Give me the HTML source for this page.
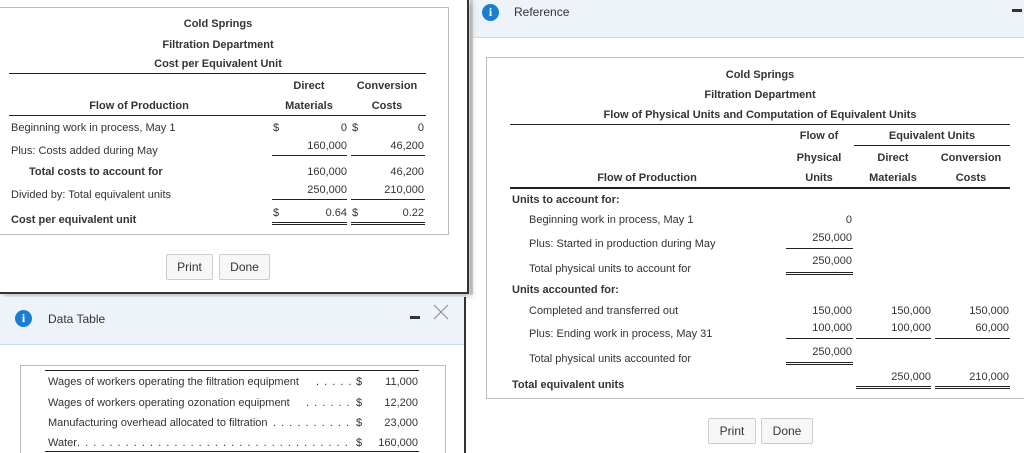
<!DOCTYPE html>
<html><head><style>
html,body{margin:0;width:1024px;height:453px;overflow:hidden}
body{background:#fff;font-family:"Liberation Sans",sans-serif;font-size:11px;color:#333;position:relative}
.a{position:absolute;white-space:nowrap;line-height:14px}
.b{font-weight:bold}
.c{transform:translateX(-50%)}
.r{transform:translateX(-100%)}
.l{position:absolute;background:#222;height:1px}
.d{position:absolute;border-top:1px solid #222;border-bottom:1px solid #222;height:1px}
.btn{position:absolute;border:1px solid #ccc;border-radius:2px;background:#f7f7f7;font-size:12px;text-align:center;line-height:24px;color:#333}
.ic{position:absolute;width:17px;height:17px;border-radius:50%;background:#1a7fd1;color:#fff;font:bold 12px "Liberation Serif",serif;text-align:center;line-height:17px}
.dots{position:absolute;overflow:hidden;white-space:nowrap;line-height:14px;letter-spacing:1px}
</style></head><body>
<!-- right window -->
<div style="position:absolute;left:470px;top:0;width:554px;height:37px;background:#eef3fa;border-bottom:1px solid #d0dcea"></div>
<div style="position:absolute;left:470px;top:0;width:3px;height:295px;background:#d8d8d8"></div>
<div class="ic" style="left:482px;top:4px">i</div>
<div class="a" style="left:514px;top:5px;font-size:12px">Reference</div>
<div style="position:absolute;left:1012px;top:9px;width:10px;height:3px;background:#333"></div>
<div style="position:absolute;left:486px;top:57px;width:537px;height:340px;border:1px solid #bbb;border-right:none"></div>
<div class="a b c" style="left:760px;top:68px">Cold Springs</div>
<div class="a b c" style="left:760px;top:88px">Filtration Department</div>
<div class="a b c" style="left:760px;top:108px">Flow of Physical Units and Computation of Equivalent Units</div>
<div class="l" style="left:510px;top:124px;width:500px"></div>
<div class="a b c" style="left:819px;top:129px">Flow of</div>
<div class="a b c" style="left:932px;top:129px">Equivalent Units</div>
<div class="l" style="left:854px;top:145px;width:156px"></div>
<div class="a b c" style="left:819px;top:151px">Physical</div>
<div class="a b c" style="left:893px;top:151px">Direct</div>
<div class="a b c" style="left:971px;top:151px">Conversion</div>
<div class="a b c" style="left:647px;top:171px">Flow of Production</div>
<div class="a b c" style="left:819px;top:171px">Units</div>
<div class="a b c" style="left:893px;top:171px">Materials</div>
<div class="a b c" style="left:971px;top:171px">Costs</div>
<div class="l" style="left:510px;top:187px;width:500px;height:2px"></div>
<div class="a b" style="left:512px;top:193px">Units to account for:</div>
<div class="a" style="left:529px;top:213px">Beginning work in process, May 1</div>
<div class="a r" style="left:852px;top:213px">0</div>
<div class="a" style="left:529px;top:237px">Plus: Started in production during May</div>
<div class="a r" style="left:852px;top:231px">250,000</div>
<div class="l" style="left:786px;top:248px;width:67px"></div>
<div class="a" style="left:529px;top:262px">Total physical units to account for</div>
<div class="a r" style="left:852px;top:254px">250,000</div>
<div class="d" style="left:786px;top:272px;width:67px"></div>
<div class="a b" style="left:512px;top:283px">Units accounted for:</div>
<div class="a" style="left:529px;top:304px">Completed and transferred out</div>
<div class="a r" style="left:852px;top:304px">150,000</div>
<div class="a r" style="left:931px;top:304px">150,000</div>
<div class="a r" style="left:1009px;top:304px">150,000</div>
<div class="a" style="left:529px;top:327px">Plus: Ending work in process, May 31</div>
<div class="a r" style="left:852px;top:321px">100,000</div>
<div class="a r" style="left:931px;top:321px">100,000</div>
<div class="a r" style="left:1009px;top:321px">60,000</div>
<div class="l" style="left:786px;top:338px;width:67px"></div>
<div class="l" style="left:856px;top:338px;width:75px"></div>
<div class="l" style="left:935px;top:338px;width:75px"></div>
<div class="a" style="left:529px;top:352px">Total physical units accounted for</div>
<div class="a r" style="left:852px;top:345px">250,000</div>
<div class="d" style="left:786px;top:362px;width:67px"></div>
<div class="a b" style="left:512px;top:378px">Total equivalent units</div>
<div class="a r" style="left:931px;top:370px">250,000</div>
<div class="a r" style="left:1009px;top:370px">210,000</div>
<div class="d" style="left:856px;top:386px;width:75px"></div>
<div class="d" style="left:935px;top:386px;width:75px"></div>
<div class="btn" style="left:708px;top:418px;width:46px;height:24px">Print</div>
<div class="btn" style="left:761px;top:418px;width:50px;height:24px">Done</div>

<!-- left window -->
<div style="position:absolute;left:0;top:0;width:467px;height:292px;background:#fff;border-right:2px solid #333;border-bottom:2px solid #333;box-shadow:2px 2px 6px rgba(0,0,0,.3)"></div>
<div style="position:absolute;left:0;top:7px;width:448px;height:226px;border:1px solid #bbb;border-left:none"></div>
<div class="a b c" style="left:218px;top:17px">Cold Springs</div>
<div class="a b c" style="left:218px;top:38px">Filtration Department</div>
<div class="a b c" style="left:218px;top:57px">Cost per Equivalent Unit</div>
<div class="l" style="left:9px;top:73px;width:417px"></div>
<div class="a b c" style="left:309px;top:79px">Direct</div>
<div class="a b c" style="left:387px;top:79px">Conversion</div>
<div class="a b c" style="left:139px;top:99px">Flow of Production</div>
<div class="a b c" style="left:309px;top:99px">Materials</div>
<div class="a b c" style="left:387px;top:99px">Costs</div>
<div class="l" style="left:9px;top:115px;width:417px"></div>
<div class="a" style="left:11px;top:121px">Beginning work in process, May 1</div>
<div class="a" style="left:273px;top:121px">$</div>
<div class="a r" style="left:347px;top:121px">0</div>
<div class="a" style="left:352px;top:121px">$</div>
<div class="a r" style="left:424px;top:121px">0</div>
<div class="a" style="left:11px;top:144px">Plus: Costs added during May</div>
<div class="a r" style="left:347px;top:139px">160,000</div>
<div class="a r" style="left:424px;top:139px">46,200</div>
<div class="l" style="left:272px;top:155px;width:75px"></div>
<div class="l" style="left:351px;top:155px;width:74px"></div>
<div class="a b" style="left:29px;top:165px">Total costs to account for</div>
<div class="a r" style="left:347px;top:165px">160,000</div>
<div class="a r" style="left:424px;top:165px">46,200</div>
<div class="a" style="left:11px;top:188px">Divided by: Total equivalent units</div>
<div class="a r" style="left:347px;top:183px">250,000</div>
<div class="a r" style="left:424px;top:183px">210,000</div>
<div class="l" style="left:272px;top:199px;width:75px"></div>
<div class="l" style="left:351px;top:199px;width:74px"></div>
<div class="a b" style="left:11px;top:213px">Cost per equivalent unit</div>
<div class="a" style="left:273px;top:206px">$</div>
<div class="a r" style="left:347px;top:206px">0.64</div>
<div class="a" style="left:352px;top:206px">$</div>
<div class="a r" style="left:424px;top:206px">0.22</div>
<div class="d" style="left:272px;top:222px;width:75px"></div>
<div class="d" style="left:351px;top:222px;width:74px"></div>
<div class="btn" style="left:166px;top:254px;width:45px;height:24px">Print</div>
<div class="btn" style="left:219px;top:254px;width:49px;height:24px">Done</div>

<!-- data table window -->
<div style="position:absolute;left:0;top:297px;width:464px;height:156px;overflow:hidden;background:#fff;border-right:2px solid #333">
<div style="position:absolute;left:0;top:0;width:464px;height:47px;background:#eef3fa;border-bottom:1px solid #c5dcef"></div>
<div style="position:absolute;left:20px;top:68px;width:424px;height:120px;border:1px solid #bbb"></div>
<div class="l" style="left:45px;top:73px;width:374px"></div>
<div class="a" style="left:48px;top:78px">Wages of workers operating the filtration equipment</div>
<div class="dots" style="left:316px;top:78px;width:36px">. . . . . . . . . .</div>
<div class="a" style="left:356px;top:78px">$</div>
<div class="a r" style="left:418px;top:78px">11,000</div>
<div class="a" style="left:48px;top:99px">Wages of workers operating ozonation equipment</div>
<div class="dots" style="left:306px;top:99px;width:46px">. . . . . . . . . . .</div>
<div class="a" style="left:356px;top:99px">$</div>
<div class="a r" style="left:418px;top:99px">12,200</div>
<div class="a" style="left:48px;top:119px">Manufacturing overhead allocated to filtration</div>
<div class="dots" style="left:273px;top:119px;width:79px">. . . . . . . . . . . . . . . . . .</div>
<div class="a" style="left:356px;top:119px">$</div>
<div class="a r" style="left:418px;top:119px">23,000</div>
<div class="a" style="left:48px;top:139px">Water</div>
<div class="dots" style="left:77px;top:139px;width:275px">. . . . . . . . . . . . . . . . . . . . . . . . . . . . . . . . . . . . . . . . . . . . . . . . . . . . . . . . . . . . . . . .</div>
<div class="a" style="left:356px;top:139px">$</div>
<div class="a r" style="left:418px;top:139px">160,000</div>
<div class="l" style="left:45px;top:154px;width:374px"></div>
</div>
<div class="ic" style="left:15px;top:310px">i</div>
<div class="a" style="left:48px;top:312px;font-size:12px">Data Table</div>
<div style="position:absolute;left:410px;top:316px;width:10px;height:3px;background:#333"></div>
<svg style="position:absolute;left:433px;top:304px" width="16" height="16"><path d="M1 1L15 15M15 1L1 15" stroke="#888" stroke-width="1"/></svg>
</body></html>
